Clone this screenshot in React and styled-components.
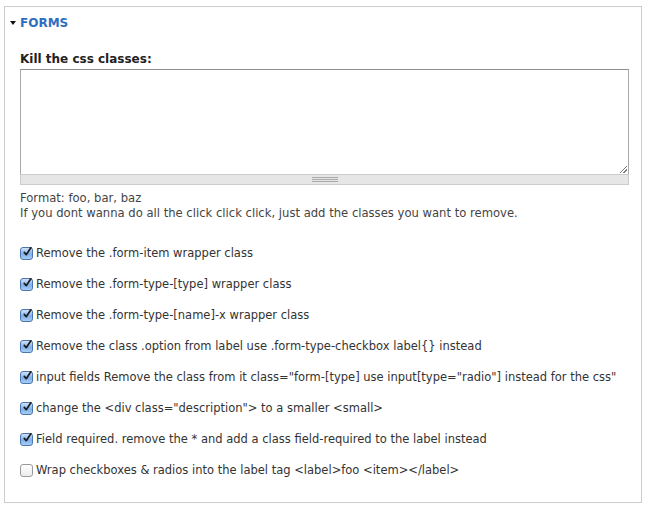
import styled, { createGlobalStyle } from "styled-components";

const GlobalStyle = createGlobalStyle`
  body {
    margin: 0;
    background: #ffffff;
    font-family: "DejaVu Sans", "Liberation Sans", sans-serif;
  }
`;

const options = [
    { text: "Remove the .form-item wrapper class", checked: true },
    { text: "Remove the .form-type-[type] wrapper class", checked: true },
    { text: "Remove the .form-type-[name]-x wrapper class", checked: true },
    { text: "Remove the class .option from label use .form-type-checkbox label{} instead", checked: true },
    { text: 'input fields Remove the class from it class="form-[type] use input[type="radio"] instead for the css"', checked: true },
    { text: 'change the <div class="description"> to a smaller <small>', checked: true },
    { text: "Field required. remove the * and add a class field-required to the label instead", checked: true },
    { text: "Wrap checkboxes & radios into the label tag <label>foo <item></label>", checked: false },
];

function CheckBox({ checked }) {
    return (
        <Box checked={checked}>
            {checked && (
                <svg width="13" height="14" viewBox="0 0 13 14">
                    <path d="M3 7.5 L5.5 10.5 L11.5 1.5" fill="none" stroke="#1b1b1b" strokeWidth="2.2" strokeLinecap="round" strokeLinejoin="round" />
                </svg>
            )}
        </Box>
    );
}

export default function App() {
    return (
        <>
            <GlobalStyle />
            <Fieldset>
                <Legend>
                    <Arrow />
                    FORMS
                </Legend>
                <FormItem>
                    <Label>Kill the css classes:</Label>
                    <TextareaWrap>
                        <Textarea />
                        <Grip>
                            <GripLines />
                        </Grip>
                    </TextareaWrap>
                    <Description>
                        Format: foo, bar, baz
                        <br />
                        If you dont wanna do all the click click click, just add the classes you want to remove.
                    </Description>
                </FormItem>
                <Options>
                    {options.map((opt) => (
                        <Option key={opt.text}>
                            <CheckBox checked={opt.checked} />
                            <span>{opt.text}</span>
                        </Option>
                    ))}
                </Options>
            </Fieldset>
        </>
    );
}

const Fieldset = styled.div`
  margin: 6px 4px 0 4px;
  width: 638px;
  height: 497px;
  box-sizing: border-box;
  border: 1px solid #cccccc;
  padding: 0 12px 0 15px;
  display: flex;
  flex-direction: column;
`;

const Legend = styled.div`
  display: flex;
  align-items: center;
  margin: 8px 0 0 -10px;
  height: 16px;
  font-size: 12px;
  font-weight: bold;
  color: #2e6ec0;
`;

const Arrow = styled.span`
  width: 0;
  height: 0;
  border-left: 3px solid transparent;
  border-right: 3px solid transparent;
  border-top: 4px solid #111111;
  margin-right: 4px;
`;

const FormItem = styled.div`
  margin-top: 21px;
  display: flex;
  flex-direction: column;
`;

const Label = styled.div`
  font-size: 12px;
  font-weight: bold;
  color: #222222;
  height: 15px;
  line-height: 15px;
`;

const TextareaWrap = styled.div`
  margin-top: 2px;
  display: flex;
  flex-direction: column;
`;

const Textarea = styled.div`
  height: 104px;
  border: 1px solid #a9a9a9;
  border-top-color: #8e8e8e;
  border-bottom: none;
  background: #ffffff;
  position: relative;
  &::after {
    content: "";
    position: absolute;
    right: 1px;
    bottom: 1px;
    width: 7px;
    height: 7px;
    background: linear-gradient(135deg, transparent 45%, #777 45%, #777 55%, transparent 55%, transparent 70%, #777 70%, #777 80%, transparent 80%);
  }
`;

const Grip = styled.div`
  height: 9px;
  background: #e6e6e6;
  border: 1px solid #cccccc;
  display: flex;
  align-items: center;
  justify-content: center;
`;

const GripLines = styled.div`
  width: 26px;
  height: 5px;
  border-top: 1px solid #aaaaaa;
  border-bottom: 1px solid #aaaaaa;
  box-sizing: border-box;
  position: relative;
  &::after {
    content: "";
    position: absolute;
    left: 0;
    right: 0;
    top: 1px;
    border-top: 1px solid #aaaaaa;
  }
`;

const Description = styled.div`
  margin-top: 6px;
  font-size: 11.6px;
  line-height: 15px;
  color: #444444;
`;

const Options = styled.div`
  margin-top: 23px;
  display: flex;
  flex-direction: column;
  gap: 13px;
`;

const Option = styled.label`
  display: flex;
  align-items: center;
  gap: 3px;
  height: 18px;
  font-size: 11.5px;
  color: #333333;
  white-space: nowrap;
`;

const Box = styled.span`
  width: 13px;
  height: 13px;
  box-sizing: border-box;
  border-radius: 3px;
  border: 1px solid ${(props) => (props.checked ? "#4a76b0" : "#9a9a9a")};
  background: ${(props) =>
        props.checked
            ? "linear-gradient(#cfe3fb, #7fb0ea 55%, #a9cdf5)"
            : "linear-gradient(#ffffff, #ececec)"};
  display: flex;
  align-items: center;
  justify-content: center;
  flex-shrink: 0;
  svg {
    display: block;
    margin-top: -3px;
    margin-left: 1px;
  }
`;
